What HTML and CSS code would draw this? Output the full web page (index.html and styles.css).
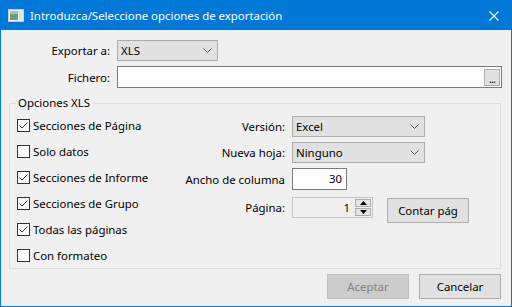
FILE: index.html
```html
<!DOCTYPE html>
<html lang="es">
<head>
    <meta charset="UTF-8">
    <title>Introduzca/Seleccione opciones de exportación</title>
    <link rel="stylesheet" href="styles.css">
</head>
<body>
    <div class="window">
        <div class="titlebar">
            <svg class="app-icon" width="16" height="13" viewBox="0 0 16 13">
                <rect x="0.5" y="0.5" width="15" height="12" fill="#eef0ee" stroke="#c8ccc8"/>
                <rect x="2" y="2" width="8" height="9" fill="#6f9a7c"/>
                <rect x="2" y="2" width="8" height="3" fill="#a9c2b0"/>
                <rect x="11" y="2" width="3" height="9" fill="#dfe3df"/>
            </svg>
            <span class="title">Introduzca/Seleccione opciones de exportación</span>
            <svg class="close" width="10" height="10" viewBox="0 0 10 10">
                <path d="M0.5 0.5 L9.5 9.5 M9.5 0.5 L0.5 9.5" stroke="#fff" stroke-width="1.1" fill="none"/>
            </svg>
        </div>

        <div class="content">
            <div class="field-row">
                <span class="field-label">Exportar a:</span>
                <div class="combo combo-export">
                    <span>XLS</span>
                    <svg class="chevron" width="9" height="5" viewBox="0 0 9 5"><path d="M0.5 0.5 L4.5 4.5 L8.5 0.5" stroke="#555" fill="none"/></svg>
                </div>
            </div>
            <div class="field-row row-file">
                <span class="field-label">Fichero:</span>
                <div class="textbox textbox-file">
                    <span class="browse">...</span>
                </div>
            </div>

            <fieldset class="group">
                <legend>Opciones XLS</legend>
                <div class="group-body">
                    <div class="checks">
                        <div class="check-row"><span class="checkbox"><svg width="11" height="11" viewBox="0 0 11 11"><path d="M1.5 5.5 L4 8 L9.5 2.5" stroke="#333" fill="none"/></svg></span>Secciones de Página</div>
                        <div class="check-row"><span class="checkbox"></span>Solo datos</div>
                        <div class="check-row"><span class="checkbox"><svg width="11" height="11" viewBox="0 0 11 11"><path d="M1.5 5.5 L4 8 L9.5 2.5" stroke="#333" fill="none"/></svg></span>Secciones de Informe</div>
                        <div class="check-row"><span class="checkbox"><svg width="11" height="11" viewBox="0 0 11 11"><path d="M1.5 5.5 L4 8 L9.5 2.5" stroke="#333" fill="none"/></svg></span>Secciones de Grupo</div>
                        <div class="check-row"><span class="checkbox"><svg width="11" height="11" viewBox="0 0 11 11"><path d="M1.5 5.5 L4 8 L9.5 2.5" stroke="#333" fill="none"/></svg></span>Todas las páginas</div>
                        <div class="check-row"><span class="checkbox"></span>Con formateo</div>
                    </div>

                    <div class="options">
                        <div class="opt-row">
                            <span class="opt-label">Versión:</span>
                            <div class="combo combo-wide">
                                <span>Excel</span>
                                <svg class="chevron" width="9" height="5" viewBox="0 0 9 5"><path d="M0.5 0.5 L4.5 4.5 L8.5 0.5" stroke="#555" fill="none"/></svg>
                            </div>
                        </div>
                        <div class="opt-row">
                            <span class="opt-label">Nueva hoja:</span>
                            <div class="combo combo-wide">
                                <span>Ninguno</span>
                                <svg class="chevron" width="9" height="5" viewBox="0 0 9 5"><path d="M0.5 0.5 L4.5 4.5 L8.5 0.5" stroke="#555" fill="none"/></svg>
                            </div>
                        </div>
                        <div class="opt-row row-width">
                            <span class="opt-label">Ancho de columna</span>
                            <div class="textbox textbox-num">30</div>
                        </div>
                        <div class="opt-row row-page">
                            <span class="opt-label">Página:</span>
                            <div class="spinner">
                                <span class="spin-value">1</span>
                                <div class="spin-buttons">
                                    <span class="spin-btn"><svg width="7" height="4" viewBox="0 0 7 4"><path d="M3.5 0 L7 4 L0 4 Z" fill="#000"/></svg></span>
                                    <span class="spin-btn"><svg width="7" height="4" viewBox="0 0 7 4"><path d="M0 0 L7 0 L3.5 4 Z" fill="#000"/></svg></span>
                                </div>
                            </div>
                            <button class="btn btn-count">Contar pág</button>
                        </div>
                    </div>
                </div>
            </fieldset>

            <div class="actions">
                <button class="btn" disabled>Aceptar</button>
                <button class="btn">Cancelar</button>
            </div>
        </div>
    </div>
</body>
</html>
```

FILE: styles.css
```css
body {
    margin: 0;
    font-family: "Noto Sans", sans-serif;
    font-size: 11.4px;
    color: #000;
}
.window {
    width: 512px;
    height: 307px;
    box-sizing: border-box;
    border: 1px solid #0078d7;
    background-color: #f0f0f0;
    display: flex;
    flex-direction: column;
    white-space: nowrap;
}
.titlebar {
    height: 29px;
    background-color: #0078d7;
    color: white;
    display: flex;
    align-items: center;
    padding-left: 7px;
}
.app-icon {
    margin-right: 6px;
}
.title {
    flex: 1;
    line-height: 16px;
}
.close {
    margin-right: 12px;
}
.content {
    flex: 1;
    padding-top: 10px;
}
.field-row {
    display: flex;
    align-items: center;
}
.row-file {
    margin-top: 5px;
}
.field-label {
    width: 109px;
    margin-right: 7px;
    text-align: right;
}
.combo {
    box-sizing: border-box;
    height: 21px;
    border: 1px solid #adadad;
    background-color: #e1e1e1;
    display: flex;
    align-items: center;
    justify-content: space-between;
    padding: 0 5px 0 3px;
}
.combo-export {
    width: 101px;
}
.combo-wide {
    width: 133px;
}
.textbox {
    box-sizing: border-box;
    height: 22px;
    border: 1px solid #7a7a7a;
    background-color: white;
}
.textbox-file {
    width: 385px;
    display: flex;
    align-items: center;
    justify-content: flex-end;
    padding-right: 1px;
}
.browse {
    box-sizing: border-box;
    width: 16px;
    height: 17px;
    border: 1px solid #adadad;
    background-color: #e1e1e1;
    font-size: 11px;
    line-height: 18px;
    text-align: center;
    letter-spacing: -1px;
}
.group {
    margin: 7px 10px 0 8px;
    border: 1px solid #dcdcdc;
    padding: 0 0 0 6px;
    min-width: 0;
}
.group legend {
    padding: 0 2px;
    line-height: 16px;
}
.group-body {
    display: flex;
    padding-top: 1px;
}
.checks {
    width: 168px;
}
.check-row {
    height: 26px;
    display: flex;
    align-items: center;
}
.checkbox {
    box-sizing: border-box;
    width: 13px;
    height: 13px;
    border: 1px solid #333;
    background-color: white;
    margin: 0 3px 0 1px;
    display: flex;
}
.options {
    display: flex;
    flex-direction: column;
    padding-top: 4px;
}
.opt-row {
    display: flex;
    align-items: center;
    margin-bottom: 5px;
}
.row-width {
    margin-bottom: 7px;
}
.row-page {
    align-items: flex-start;
}
.opt-label {
    width: 101px;
    margin-right: 7px;
    text-align: right;
}
.row-page .opt-label {
    line-height: 21px;
}
.textbox-num {
    width: 55px;
    text-align: right;
    padding-right: 4px;
    line-height: 20px;
}
.spinner {
    box-sizing: border-box;
    width: 81px;
    height: 21px;
    border: 1px solid #c4c4c4;
    display: flex;
    align-items: center;
    justify-content: flex-end;
    padding-right: 1px;
}
.spin-value {
    margin-right: 5px;
}
.spin-buttons {
    display: flex;
    flex-direction: column;
    width: 16px;
}
.spin-btn {
    box-sizing: border-box;
    height: 8px;
    border: 1px solid #adadad;
    background-color: #e6e6e6;
    display: flex;
    align-items: center;
    justify-content: center;
}
.spin-btn + .spin-btn {
    margin-top: 1px;
}
.btn {
    box-sizing: border-box;
    width: 82px;
    height: 25px;
    border: 1px solid #adadad;
    background-color: #e1e1e1;
    font-family: "Noto Sans", sans-serif;
    font-size: 11.4px;
    color: #000;
    padding: 0;
}
.btn:disabled {
    background-color: #cccccc;
    border-color: #bfbfbf;
    color: #838383;
}
.btn-count {
    margin: 1px 0 0 14px;
}
.actions {
    display: flex;
    justify-content: flex-end;
    gap: 10px;
    margin-top: 5px;
    padding-right: 10px;
}
```
